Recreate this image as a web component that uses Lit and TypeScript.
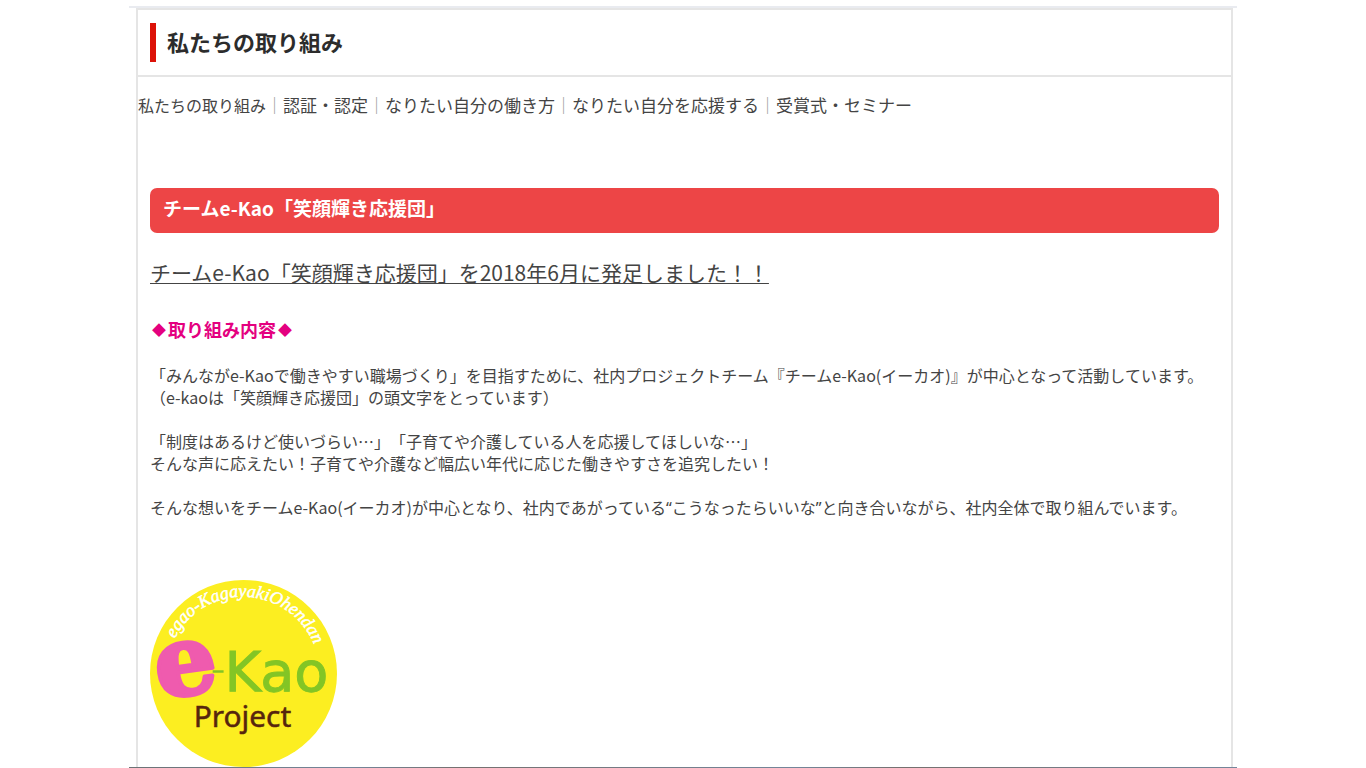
import { LitElement, html, css } from "lit";
import { customElement } from "lit/decorators.js";

@customElement("project-logo")
class ProjectLogo extends LitElement {
  static styles = css`
    :host { display: block; }
    .logo { display: block; width: 187px; height: 187px; }
    .arc { font: italic 18px "Liberation Serif", serif; fill: #fff; stroke: #fff; stroke-width: 0.5px; }
    .big { font: bold 98px "DejaVu Serif", serif; fill: #ef5bae; stroke: #ef5bae; stroke-width: 4px; stroke-linejoin: round; }
    .kao { font: 56px "DejaVu Sans", sans-serif; fill: #83c525; stroke: #83c525; stroke-width: 1px; }
    .project { font: 30px "Noto Sans", sans-serif; fill: #56250d; stroke: #56250d; stroke-width: 0.5px; }
  `;
  render() {
    return html`
      <svg class="logo" viewBox="0 0 188 188" role="img" aria-label="e-Kao Project">
        <defs><path id="arc" d="M25 59 A77 77 0 0 1 170 84" /></defs>
        <circle cx="94" cy="94" r="94" fill="#fcee21" />
        <text class="arc"><textPath href="#arc">egao-KagayakiOhendan</textPath></text>
        <text class="big" x="5" y="115" transform="rotate(-8 36 90)">e</text>
        <path d="M63 92H74" stroke="#83c525" stroke-width="2.5" />
        <text class="kao" x="75" y="112">Kao</text>
        <text class="project" x="44" y="148">Project</text>
      </svg>
    `;
  }
}

@customElement("app-root")
class AppRoot extends LitElement {
  static styles = css`
    :host {
      display: block;
      background: #fff;
      color: #444;
      font-family: "Noto Sans CJK JP", sans-serif;
      text-spacing-trim: space-all;
    }
    .page {
      box-sizing: border-box;
      max-width: 1108px;
      min-height: 100vh;
      margin: 0 auto;
      padding-top: 6px;
      display: flex;
      flex-direction: column;
    }
    .rule { height: 2px; background: #e9ebf0; }
    .card {
      flex: 1;
      margin: 0 4px 0 7px;
      border: 2px solid #e5e5e5;
      border-bottom: 0;
    }
    .head { padding: 13px 12px; border-bottom: 2px solid #e5e5e5; }
    .title {
      margin: 0;
      padding: 0 0 2px 11px;
      border-left: 6px solid #dc1208;
      color: #2c2c2c;
      font-size: 22px;
      line-height: 37px;
    }
    .nav { display: flex; flex-wrap: wrap; padding: 15px 0 0; font-size: 17px; line-height: 26px; }
    .nav a { color: inherit; text-decoration: none; }
    .nav .current { font-size: 16px; }
    .bar { width: 17px; text-align: center; color: #999; }
    .content { padding: 70px 12px 0; }
    .banner {
      margin: 0;
      padding: 0 13px 5px;
      border-radius: 7px;
      background: #ed4546;
      color: #fff;
      font-size: 19px;
      line-height: 40px;
    }
    .lead {
      margin: 23px 0 0;
      font-size: 21px;
      font-weight: 400;
      line-height: 32px;
      text-decoration: underline;
      text-decoration-thickness: 1px;
      text-underline-offset: 2px;
      text-decoration-skip-ink: none;
    }
    .topic { display: flex; align-items: center; margin: 28px 0 22px; color: #e4007f; font-size: 18px; line-height: 26px; }
    .mark { width: 18px; font-size: 14px; text-align: center; }
    .text { margin: 0 0 22px; font-size: 16px; line-height: 22px; }
    .latin { font-family: "Noto Sans", sans-serif; }
    .logo { margin-top: 61px; }
    .foot { height: 1px; background: linear-gradient(90deg, #6c7275, #74869a 20%, #75706f 30%, #74869a 60%, #75706f 70%, #74869a); }
  `;
  render() {
    const bar = html`<span class="bar">｜</span>`;
    return html`
      <div class="page" lang="ja">
        <div class="rule"></div>
        <main class="card">
          <header class="head"><h1 class="title">私たちの取り組み</h1></header>
          <nav class="nav">
            <a class="current" href="#efforts">私たちの取り組み</a>${bar}<a href="#certification">認証・認定</a>${bar}<a href="#workstyle">なりたい自分の働き方</a>${bar}<a href="#support">なりたい自分を応援する</a>${bar}<a href="#seminar">受賞式・セミナー</a>
          </nav>
          <section class="content">
            <h2 class="banner">チームe-Kao「笑顔輝き応援団」</h2>
            <h3 class="lead">チームe-Kao「笑顔輝き応援団」を2018年6月に発足しました！！</h3>
            <h4 class="topic"><span class="mark">◆</span>取り組み内容<span class="mark">◆</span></h4>
            <p class="text">「みんながe-Kaoで働きやすい職場づくり」を目指すために、社内プロジェクトチーム『チームe-Kao(イーカオ)』が中心となって活動しています。<br>（e-kaoは「笑顔輝き応援団」の頭文字をとっています）</p>
            <p class="text">「制度はあるけど使いづらい…」「子育てや介護している人を応援してほしいな…」<br>そんな声に応えたい！子育てや介護など幅広い年代に応じた働きやすさを追究したい！</p>
            <p class="text">そんな想いをチームe-Kao(イーカオ)が中心となり、社内であがっている<span class="latin">“</span>こうなったらいいな<span class="latin">”</span>と向き合いながら、社内全体で取り組んでいます。</p>
            <project-logo class="logo"></project-logo>
          </section>
        </main>
        <div class="foot"></div>
      </div>
    `;
  }
}
